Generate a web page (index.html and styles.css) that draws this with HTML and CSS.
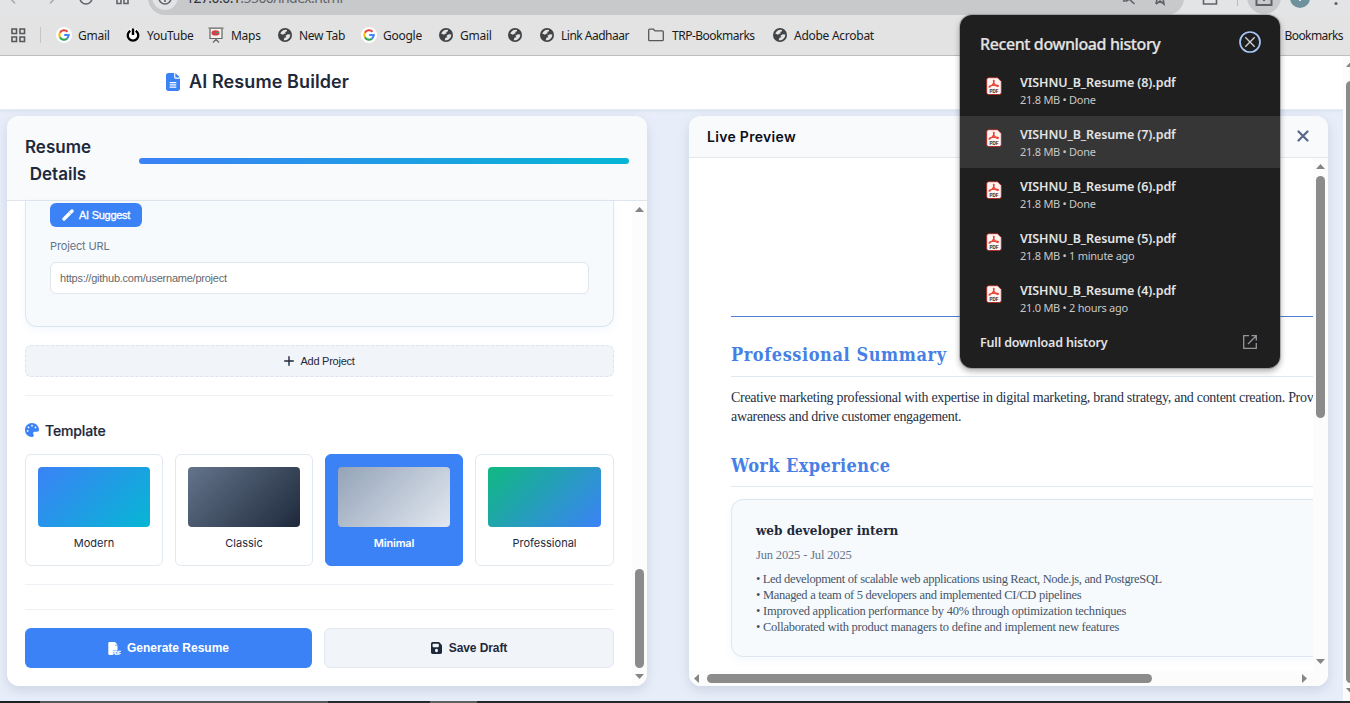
FILE: index.html
```html
<!DOCTYPE html>
<html lang="en">
<head>
<meta charset="utf-8">
<title>AI Resume Builder</title>
<link rel="stylesheet" href="styles.css">
</head>
<body>
<svg class="defs" width="0" height="0">
  <defs>
    <symbol id="globe" viewBox="0 0 14 14"><circle cx="7" cy="7" r="7" fill="#414345"/><path d="M7.500 1.800C5 2 3.500 3.300 2.200 5.600L5 6.800 6.200 5.700 7.600 5.500 7.300 4 9 3.300 9 1.900ZM12.300 6.400 9.800 6.200 7.400 7.800 8.400 9.300 6.400 9.700 5.700 12.200C9 12.600 12.200 10.300 12.300 6.400Z" fill="#e2e3e4"/></symbol>
    <symbol id="google" viewBox="0 0 16 16"><circle cx="8" cy="8" r="8" fill="#fff"/><g fill="none" stroke-width="2.100"><path d="M11.500 4.700A4.700 4.700 0 0 0 3.900 5.700" stroke="#ea4335"/><path d="M3.900 5.700A4.700 4.700 0 0 0 3.900 10.300" stroke="#fbbc05"/><path d="M3.900 10.300A4.700 4.700 0 0 0 11 11.600" stroke="#34a853"/><path d="M11 11.600A4.700 4.700 0 0 0 12.700 8H8.200" stroke="#4285f4"/></g></symbol>
    <symbol id="pdf" viewBox="0 0 16 18"><path d="M3 .7H11.500L15.300 4.500V15.500A2 2 0 0 1 13.300 17.500H2.700A2 2 0 0 1 .7 15.500V2.700A2 2 0 0 1 2.700.7Z" fill="#fff4f2" stroke="#b3261e" stroke-width=".9"/><path d="M7.500 3.500C9 3.500 7.800 7.500 3.800 10 2.500 10.800 3 8.700 6 8.300 9 7.800 12.500 7.800 12.300 9.200 12 10.300 7 7.500 7.500 3.500Z" fill="none" stroke="#e5453b" stroke-width="1.300"/><text x="8" y="15.600" text-anchor="middle" class="pdf-tag">PDF</text></symbol>
  </defs>
</svg>

<div class="toolbar">
  <svg width="1350" height="15" viewBox="0 0 1350 15" fill="none" stroke="#5f6368" stroke-width="1.600">
    <path d="M148 -20V-2A17 17 0 0 0 165 15H1167A17 17 0 0 0 1184 -2V-20Z" fill="#c8c9cb" stroke="none"/>
    <circle cx="165" cy="-3" r="13" fill="#e2e3e4" stroke="none"/>
    <path d="M15 3.500 10 -2M50 3.500 55 -2" stroke="#a9abae"/>
    <path d="M80 -2A6 6 0 0 0 92 -2M117 -5V3.500H121V-5M124 -5V3.500H128V-5"/>
    <circle cx="165" cy="-2" r="6"/><path d="M165 -2V2"/>
    <text x="186" y="3" textLength="157" class="url"><tspan class="url-host">127.0.0.1</tspan>:5500/index.html</text>
    <path d="M1123 .5A5 5 0 0 0 1129 -1L1134.500 4M1156 4 1160 1 1164 4 1163 -1M1157 -1 1156 4M1203.500 -2V4H1216.500V-2"/>
    <path d="M1237.500 0V6" stroke="#b9bbbd" stroke-width="1"/>
    <circle cx="1264" cy="-3" r="17" fill="#c8c9cb" stroke="none"/>
    <path d="M1256.500 0V5H1271.500V0M1264 -3V1" stroke-width="2"/>
    <circle cx="1300" cy="-2" r="10" fill="#6f919d" stroke="none"/><path d="M1300 -3V1" stroke="#fff"/>
    <circle cx="1336" cy="3.500" r="1.600" fill="#5f6368" stroke="none"/>
  </svg>
</div>

<div class="bookmarks">
  <svg class="apps" width="15" height="15" viewBox="0 0 15 15" fill="none" stroke="#55585b" stroke-width="1.600"><path d="M1 1H5.500V5.500H1ZM9 1H13.500V5.500H9ZM1 9H5.500V13.500H1ZM9 9H13.500V13.500H9Z"/></svg>
  <span class="divider"></span>
  <div class="marks">
    <div class="mark"><svg class="g"><use href="#google"/></svg><span>Gmail</span></div>
    <div class="mark"><svg viewBox="0 0 14 14"><circle cx="7" cy="7" r="7" fill="#fff"/><path d="M4.300 2.800A5.300 5.300 0 1 0 9.700 2.800M7 .5V7" fill="none" stroke="#000" stroke-width="2.400"/></svg><span>YouTube</span></div>
    <div class="mark"><svg class="m" viewBox="0 0 16 16"><path d="M2.600 2H13.400V11H2.600Z" fill="#f4f1ef"/><path d="M.5 1.200H15.500M2 2V11.500H14V2M8 12V14M8 12.500 5 15.500M8 12.500 11 15.500" fill="none" stroke="#666a66" stroke-width="1.200"/><ellipse cx="7.500" cy="5.900" rx="4" ry="2.600" fill="#d6404b"/><path d="M8 5.500H11" stroke="#496"/></svg><span>Maps</span></div>
    <div class="mark"><svg><use href="#globe"/></svg><span>New Tab</span></div>
    <div class="mark"><svg class="g"><use href="#google"/></svg><span>Google</span></div>
    <div class="mark"><svg><use href="#globe"/></svg><span>Gmail</span></div>
    <div class="mark"><svg><use href="#globe"/></svg></div>
    <div class="mark"><svg><use href="#globe"/></svg><span class="tight">Link Aadhaar</span></div>
    <div class="mark"><svg class="m f" viewBox="0 0 16 14"><path d="M.7 12V2.200Q.7 1.200 1.700 1.200H5.500L7 2.900H14.300Q15.300 2.900 15.300 3.900V11.500Q15.300 12.700 14.300 12.700H1.700Q.7 12.700.7 12Z" fill="none" stroke="#55585b" stroke-width="1.300"/></svg><span class="tight">TRP-Bookmarks</span></div>
    <div class="mark"><svg><use href="#globe"/></svg><span>Adobe Acrobat</span></div>
  </div>
  <span class="all">Bookmarks</span>
</div>

<div class="viewport">
  <div class="page">
    <header class="top">
      <svg width="14" height="18" viewBox="0 0 384 512" preserveAspectRatio="none" fill="#3b82f6"><path d="M64 0C28.700 0 0 28.700 0 64V448c0 35.300 28.700 64 64 64H320c35.300 0 64-28.700 64-64V160H256c-17.700 0-32-14.300-32-32V0H64zM256 0V128H384L256 0zM112 256H272c8.800 0 16 7.200 16 16s-7.200 16-16 16H112c-8.800 0-16-7.200-16-16s7.200-16 16-16zm0 64H272c8.800 0 16 7.200 16 16s-7.200 16-16 16H112c-8.800 0-16-7.200-16-16s7.200-16 16-16zm0 64H272c8.800 0 16 7.200 16 16s-7.200 16-16 16H112c-8.800 0-16-7.200-16-16s7.200-16 16-16z"/></svg>
      <h1>AI Resume Builder</h1>
    </header>
    <main class="columns">
      <section class="card editor">
        <div class="editor-head">
          <h2>Resume<br>Details</h2>
          <div class="progress"></div>
        </div>
        <div class="scroll-row">
          <div class="form">
            <div class="project">
              <button class="suggest"><svg width="12" height="12" viewBox="0 0 12 12"><path d="M2 10 10 2" stroke="#fff" stroke-width="3.400" stroke-linecap="round"/><path d="M7 3 9 5" stroke="#3b82f6" stroke-width=".4"/></svg><span>AI Suggest</span></button>
              <label>Project URL</label>
              <div class="input">https://github.com/username/project</div>
            </div>
            <button class="add"><svg width="10" height="10" viewBox="0 0 10 10"><path d="M5 .7V9.300M.7 5H9.300" stroke="#1e293b" stroke-width="1.400" stroke-linecap="round"/></svg><span>Add Project</span></button>
            <hr class="rule">
            <h3><svg width="14" height="14" viewBox="0 0 512 512" fill="#3b82f6"><path d="M512 256c0 .9 0 1.800 0 2.700c-.4 36.500-33.600 61.300-70.100 61.300H344c-26.500 0-48 21.500-48 48c0 3.400 .4 6.700 1 9.900c2.100 10.200 6.500 20 10.800 29.900c6.100 13.800 12.100 27.500 12.100 42c0 31.800-21.600 60.700-53.400 62c-3.500 .1-7 .2-10.600 .2C114.600 512 0 397.400 0 256S114.600 0 256 0S512 114.600 512 256zM128 288a32 32 0 1 0 -64 0 32 32 0 1 0 64 0zm0-96a32 32 0 1 0 0-64 32 32 0 1 0 0 64zM288 96a32 32 0 1 0 -64 0 32 32 0 1 0 64 0zm96 96a32 32 0 1 0 0-64 32 32 0 1 0 0 64z"/></svg><span>Template</span></h3>
            <div class="templates">
              <div class="template"><div class="swatch modern"></div><span>Modern</span></div>
              <div class="template"><div class="swatch classic"></div><span>Classic</span></div>
              <div class="template active"><div class="swatch minimal"></div><span>Minimal</span></div>
              <div class="template"><div class="swatch pro"></div><span>Professional</span></div>
            </div>
            <hr class="rule">
            <hr class="rule second">
            <div class="actions">
              <button class="generate"><svg width="13" height="13" viewBox="0 0 13 13"><path d="M1.500 0H6V3.500H9.500V7H4.500V13H1.500Q.3 13 .3 11.800V1.200Q.3 0 1.500 0ZM7 0 9.500 2.700H7ZM6 0H7V3.500H6ZM4 6.500H9.500V8.500H4Z" fill="#fff"/><text x="3.800" y="12.500" class="doc-tag">PDF</text></svg><span>Generate Resume</span></button>
              <button class="save"><svg width="11" height="12" viewBox="0 28 448 456" preserveAspectRatio="none" fill="#1e293b"><path fill-rule="evenodd" d="M64 32C28.700 32 0 60.700 0 96V416c0 35.300 28.700 64 64 64H384c35.300 0 64-28.700 64-64V173.300c0-17-6.700-33.300-18.700-45.300L352 50.700C340 38.700 323.700 32 306.700 32H64zm0 96c0-17.700 14.300-32 32-32H288c17.700 0 32 14.300 32 32v64c0 17.700-14.300 32-32 32H96c-17.700 0-32-14.300-32-32V128zM224 288a64 64 0 1 1 0 128 64 64 0 1 1 0-128z"/></svg><span>Save Draft</span></button>
            </div>
          </div>
          <div class="vbar"><i class="up"></i><b class="thumb-form"></b><i class="down"></i></div>
        </div>
      </section>

      <section class="card preview">
        <div class="preview-head">
          <h2>Live Preview</h2>
          <svg width="12" height="12" viewBox="0 0 12 12"><path d="M1.500 1.500 10.500 10.500M10.500 1.500 1.500 10.500" stroke="#56698a" stroke-width="2.200" stroke-linecap="round"/></svg>
        </div>
        <div class="scroll-row">
          <div class="doc">
            <div class="doc-top"></div>
            <h3 class="h-summary">Professional Summary</h3>
            <p class="summary"><span class="s1">Creative marketing professional with expertise in digital marketing, brand strategy, and content creation. Prov</span><br><span class="s2">awareness and drive customer engagement.</span></p>
            <h3 class="h-work">Work Experience</h3>
            <div class="job">
              <h4>web developer intern</h4>
              <div class="date">Jun 2025 - Jul 2025</div>
              <div class="b1">• Led development of scalable web applications using React, Node.js, and PostgreSQL</div>
              <div class="b2">• Managed a team of 5 developers and implemented CI/CD pipelines</div>
              <div class="b3">• Improved application performance by 40% through optimization techniques</div>
              <div class="b4">• Collaborated with product managers to define and implement new features</div>
            </div>
          </div>
          <div class="vbar"><i class="up"></i><b class="thumb-doc"></b><i class="down"></i></div>
        </div>
        <div class="hbar"><i class="left"></i><b></b><i class="right"></i></div>
      </section>
    </main>
  </div>
  <div class="pagebar"><i class="up"></i><b></b><i class="down"></i></div>
</div>
<div class="taskbar"></div>

<aside class="downloads">
  <div class="dl-head"><span>Recent download history</span>
    <svg width="22" height="22" viewBox="0 0 22 22" fill="none"><circle cx="11" cy="11" r="10" stroke="#a8c7fa" stroke-width="1.700"/><path d="M6.300 6.300 15.700 15.700M15.700 6.300 6.300 15.700" stroke="#d0d2d5" stroke-width="1.300"/></svg>
  </div>
  <div class="dl"><svg><use href="#pdf"/></svg><div><b>VISHNU_B_Resume (8).pdf</b><small>21.8 MB • Done</small></div></div>
  <div class="dl hover"><svg><use href="#pdf"/></svg><div><b>VISHNU_B_Resume (7).pdf</b><small>21.8 MB • Done</small></div></div>
  <div class="dl"><svg><use href="#pdf"/></svg><div><b>VISHNU_B_Resume (6).pdf</b><small>21.8 MB • Done</small></div></div>
  <div class="dl"><svg><use href="#pdf"/></svg><div><b>VISHNU_B_Resume (5).pdf</b><small>21.8 MB • 1 minute ago</small></div></div>
  <div class="dl"><svg><use href="#pdf"/></svg><div><b>VISHNU_B_Resume (4).pdf</b><small>21.0 MB • 2 hours ago</small></div></div>
  <div class="dl-foot"><span>Full download history</span>
    <svg width="14" height="14" viewBox="0 0 14 14" fill="none" stroke="#94979a" stroke-width="1.300"><path d="M6 .7H.7V13.300H13.300V8M8.500 .7H13.300V5.500M13.300 .7 5 9"/></svg>
  </div>
</aside>
</body>
</html>
```

FILE: styles.css
```css
* { box-sizing: border-box; }
body {
  margin: 0;
  width: 1350px;
  height: 703px;
  overflow: hidden;
  position: relative;
  display: flex;
  flex-direction: column;
  font-family: Inter, "Liberation Sans", sans-serif;
  color: #1e293b;
}
h1, h2, h3, h4, p { margin: 0; }
span, b, small, label { white-space: nowrap; }
.defs { position: absolute; }
svg { display: block; flex: none; }
button { border: 0; margin: 0; font-family: "Liberation Sans", Arial, sans-serif; color: #1e293b; }

/* browser chrome */
.toolbar { height: 15px; flex: none; background: #e3e4e5; overflow: hidden; }
.url { font: 14px "Noto Sans", sans-serif; fill: #606367; stroke: none; }
.url-host { fill: #303234; }
.bookmarks {
  height: 41px;
  flex: none;
  display: flex;
  align-items: center;
  padding: 0 7px 0 11px;
  background: #e3e3e3;
  border-bottom: 1px solid #bfc0c2;
  font: 12px "Noto Sans", sans-serif;
  letter-spacing: -.27px;
  color: #1b1c1e;
}
.tight { letter-spacing: -.5px; }
.all { letter-spacing: -.6px; }
.divider { width: 1px; height: 16px; background: #c3c5c7; margin: 0 16px 0 14px; }
.marks { display: grid; grid-template-columns: 69px 83px 69px 84px 77px 69px 32px 108px 125px 101px; flex: 1; }
.mark { display: flex; align-items: center; gap: 7px; }
.mark svg { width: 14px; height: 14px; }
.mark .g { width: 16px; height: 16px; margin: 0 -1px; }
.mark .m { width: 16px; height: 16px; margin-left: -1px; }
.mark .f { margin: 0 1px 0 0; }

/* page */
.viewport { flex: 1; display: flex; min-height: 0; }
.page { width: 1343px; display: flex; flex-direction: column; background: #e8eef9; }
.top {
  height: 54px;
  flex: none;
  background: #fff;
  border-bottom: 1px solid #e6ebf2;
  box-shadow: 0 1px 3px rgba(30, 60, 110, .08);
  display: flex;
  align-items: center;
  gap: 9px;
  padding: 0 0 1px 166px;
}
.top h1 { font-size: 18px; font-weight: 600; line-height: 24px; letter-spacing: .1px; }
.columns { flex: 1; display: flex; gap: 42px; padding: 6px 15px 15px 7px; min-height: 0; }
.card {
  border-radius: 12px;
  background: #fff;
  overflow: hidden;
  display: flex;
  flex-direction: column;
  box-shadow: 0 4px 12px rgba(40, 60, 100, .15);
}
.editor { width: 640px; }
.preview { width: 639px; }
.editor-head {
  height: 85px;
  flex: none;
  padding: 5px 18px 0;
  display: flex;
  align-items: center;
  background: #f8fafc;
  border-bottom: 1px solid #dfe5ec;
}
.editor-head h2 { width: 66px; margin: 1px 48px 0 0; text-align: center; font-size: 17px; line-height: 27px; font-weight: 600; }
.progress { flex: 1; height: 6px; border-radius: 3px; background: linear-gradient(90deg, #3b82f6, #06b6d4); margin-top: 1px; }
.scroll-row { flex: 1; display: flex; min-height: 0; }
.form { flex: 1; padding: 0 18px; }
.project {
  height: 126px;
  padding: 2px 24px 0;
  border: 1px solid #dbe6f0;
  border-top: 0;
  border-radius: 0 0 12px 12px;
  background: #f6fafd;
  box-shadow: 0 3px 8px rgba(59, 130, 246, .06);
}
.suggest { display: flex; align-items: center; gap: 5px; width: 92px; height: 24px; padding: 0 0 0 12px; border-radius: 6px; background: #3b82f6; color: #fff; font-size: 11px; letter-spacing: -.27px; -webkit-text-stroke: .3px #fff; }
.project label { display: block; margin: 12px 0 9px; font-size: 11px; line-height: 14px; letter-spacing: -.15px; color: #64748b; }
.input { height: 32px; padding-left: 9px; border: 1px solid #e0e5ec; border-radius: 6px; background: #fff; color: #65686c; font: 11px/31px "Liberation Sans", sans-serif; letter-spacing: -.23px; }
.add { display: flex; align-items: center; justify-content: center; gap: 6px; width: 100%; height: 32px; margin-top: 18px; padding: 0; border: 1px dashed #dde4ec; border-radius: 6px; background: #f1f4f9; font-size: 11px; letter-spacing: -.25px; }
.rule { margin: 18px 0 0; border: 0; height: 1px; background: #eef1f5; }
.form h3 { display: flex; align-items: center; gap: 6px; height: 20px; margin: 24px 0 14px; font-size: 14px; font-weight: 500; letter-spacing: -.15px; }
.form h3 span { -webkit-text-stroke: .2px #1e293b; }
.templates { display: grid; grid-template-columns: 138px 138px 138px 139px; gap: 12px; }
.template { height: 112px; padding: 12px; border: 1px solid #e2e8f0; border-radius: 6px; text-align: center; font-size: 11px; line-height: 14px; }
.template.active { background: #3b82f6; border-color: #3b82f6; color: #fff; font-weight: 600; letter-spacing: -.2px; }
.swatch { height: 60px; border-radius: 4px; margin-bottom: 9px; }
.modern { background: linear-gradient(135deg, #3b82f6, #06b6d4); }
.classic { background: linear-gradient(135deg, #64748b, #1e293b); }
.minimal { background: linear-gradient(135deg, #94a3b8, #e2e8f0); }
.pro { background: linear-gradient(135deg, #10b981, #3b82f6); }
.rule.second { margin-top: 24px; }
.actions { display: flex; gap: 12px; margin-top: 18px; }
.actions button { height: 40px; padding: 0; display: flex; align-items: center; justify-content: center; gap: 6px; border-radius: 6px; font-size: 12px; font-weight: 700; }
.generate { width: 287px; background: #3b82f6; color: #fff; }
.actions .save { width: 290px; gap: 7px; background: #f1f4f9; border: 1px solid #e2e8f0; letter-spacing: -.1px; }
.doc-tag { font: bold 4.500px "Liberation Sans", sans-serif; fill: #fff; stroke: #fff; stroke-width: .3px; }

/* scrollbars */
.vbar { width: 15px; flex: none; background: #fcfcfc; display: flex; flex-direction: column; align-items: center; padding: 6px 0 7px; }
.vbar b { width: 9px; border-radius: 5px; background: #8b8b8b; }
.thumb-form { height: 99px; margin-top: 357px; }
.thumb-doc { height: 242px; margin-top: 7px; }
.up, .down { width: 9px; height: 5px; flex: none; background: #858585; }
.up { clip-path: polygon(50% 0, 100% 100%, 0 100%); }
.down { clip-path: polygon(0 0, 100% 0, 50% 100%); margin-top: auto; }
.hbar { height: 15px; flex: none; background: #fcfcfc; display: flex; align-items: center; padding: 0 21px 0 5px; }
.hbar b { width: 445px; height: 9px; border-radius: 5px; background: #8b8b8b; margin-left: 8px; }
.left, .right { width: 5px; height: 9px; flex: none; background: #858585; }
.left { clip-path: polygon(0 50%, 100% 0, 100% 100%); }
.right { clip-path: polygon(0 0, 100% 50%, 0 100%); margin-left: auto; }
.pagebar { width: 7px; overflow: hidden; background: #fcfcfc; display: flex; flex-direction: column; align-items: flex-start; padding: 6px 0 8px 3px; }
.pagebar b { width: 9px; height: 602px; margin-top: 14px; border-radius: 5px; background: #8b8b8b; }
.taskbar { height: 2px; flex: none; background: linear-gradient(90deg, #1f2022 40px, #555759 40px 328px, #262a2c 328px 430px, #5c605e 430px 477px, #25282b 477px); }

/* preview */
.preview-head { height: 42px; flex: none; display: flex; align-items: center; justify-content: space-between; padding: 0 19px 2px 18px; background: #f8fafc; border-bottom: 1px solid #e2e8f0; }
.preview-head h2 { margin-top: 2px; font-size: 14px; font-weight: 600; letter-spacing: .3px; color: #0a0f1a; }
.doc { width: 624px; padding-left: 42px; overflow: hidden; font-family: "Liberation Serif", serif; }
.doc-top { height: 159px; border-bottom: 1px solid #4b7fd6; }
.doc h3 { color: #467fe5; font-family: "DejaVu Serif Condensed", "DejaVu Serif", serif; font-stretch: condensed; font-size: 18px; font-weight: 700; border-bottom: 1px solid #e2e8f0; line-height: 25px; }
.h-summary { height: 35px; margin-top: 25px; letter-spacing: .57px; }
.summary { margin-top: 11px; font-size: 14px; line-height: 19px; color: #263244; }
.s1 { letter-spacing: -.3px; }
.s2 { letter-spacing: -.32px; }
.h-work { height: 34px; margin-top: 27px; letter-spacing: .4px; }
.job { width: 700px; height: 158px; margin-top: 12px; padding: 18px 24px 0; border: 1px solid #dde6f0; border-radius: 12px; background: #f6fafd; box-shadow: 0 3px 8px rgba(59, 130, 246, .06); font-size: 12.500px; line-height: 16px; color: #475569; white-space: nowrap; }
.job h4 { font-family: "DejaVu Serif Condensed", "DejaVu Serif", serif; font-stretch: condensed; font-size: 13.400px; line-height: 24px; color: #1e293b; }
.date { margin: 5px 0 8px; letter-spacing: -.16px; color: #64748b; }
.b1 { letter-spacing: -.34px; }
.b2 { letter-spacing: -.3px; }
.b3 { letter-spacing: -.24px; }
.b4 { letter-spacing: -.25px; }

/* downloads popup */
.downloads {
  position: absolute;
  left: 960px;
  top: 15px;
  width: 320px;
  height: 353px;
  border-radius: 12px;
  background: #1f1f1f;
  box-shadow: 0 0 0 1px rgba(120, 120, 120, .45), 0 3px 6px rgba(0, 0, 0, .35);
  color: #e3e3e3;
  font-family: "Noto Sans", sans-serif;
}
.dl-head { height: 49px; display: flex; align-items: center; justify-content: space-between; padding: 9px 19px 0 20px; font-size: 16px; font-weight: 500; letter-spacing: -.4px; }
.dl-head span { -webkit-text-stroke: .2px #e3e3e3; }
.dl-head svg { margin-top: -5px; }
.dl { height: 52px; display: flex; gap: 18px; padding: 10px 0 0 26px; }
.dl.hover { background: #363636; }
.dl svg { width: 16px; height: 18px; margin-top: 3px; }
.dl b { display: block; font-size: 12.500px; font-weight: 600; line-height: 18px; letter-spacing: -.1px; }
.dl small { display: block; margin-top: -1px; font-size: 11px; line-height: 18px; letter-spacing: -.26px; color: #c7c7c7; }
.dl-foot { height: 36px; display: flex; align-items: center; justify-content: space-between; padding: 0 23px 0 20px; font-size: 12.500px; font-weight: 600; letter-spacing: -.17px; }
.pdf-tag { font: bold 4.500px "Liberation Sans", sans-serif; fill: #222; stroke: none; letter-spacing: 0; }
```
